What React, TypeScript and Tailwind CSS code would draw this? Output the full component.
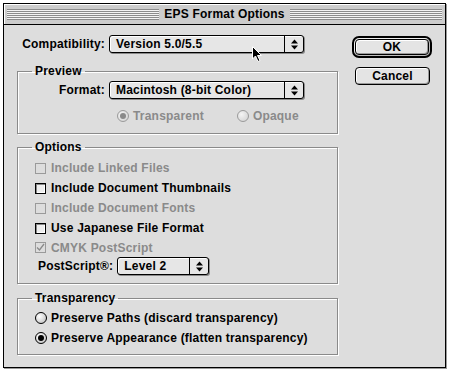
import React from "react";

// Mac OS 8/9 "Platinum" dialog: EPS Format Options

const Arrows = () => (
  <svg width="7" height="11" viewBox="0 0 7 11">
    <path d="M0 4.5 L3.5 0.5 L7 4.5 Z M0 6.5 L3.5 10.5 L7 6.5 Z" fill="#000" />
  </svg>
);

function Popup({ value, width }: { value: string; width: string }) {
  return (
    <div
      className={`${width} h-[18px] flex items-stretch border border-black rounded-[3px] bg-[#e6e6e6] shadow-[1px_1px_0_#8a8a8a,inset_1px_1px_0_#fff]`}
    >
      <span className="flex-1 pl-[6px] flex items-center text-black">{value}</span>
      <span className="w-[19px] border-l border-black flex items-center justify-center">
        <Arrows />
      </span>
    </div>
  );
}

function Checkbox({ checked, disabled }: { checked?: boolean; disabled?: boolean }) {
  return (
    <span
      className={
        disabled
          ? "w-[11px] h-[11px] border border-[#9a9a9a] bg-[#dddddd] flex items-center justify-center"
          : "w-[11px] h-[11px] border border-black bg-[#eeeeee] shadow-[inset_1px_1px_0_#888,inset_-1px_-1px_0_#fff] flex items-center justify-center"
      }
    >
      {checked && (
        <svg width="9" height="9" viewBox="0 0 9 9">
          <path d="M1 4.5 L3.5 7 L8 1" stroke={disabled ? "#8a8a8a" : "#000"} strokeWidth="1.3" fill="none" />
        </svg>
      )}
    </span>
  );
}

function Radio({ checked, disabled }: { checked?: boolean; disabled?: boolean }) {
  return (
    <span
      className={
        disabled
          ? "w-[12px] h-[12px] rounded-full border border-[#9a9a9a] bg-[radial-gradient(circle_at_35%_35%,#f4f4f4,#cfcfcf)] flex items-center justify-center"
          : "w-[12px] h-[12px] rounded-full border border-black bg-[radial-gradient(circle_at_35%_35%,#ffffff,#b8b8b8)] flex items-center justify-center"
      }
    >
      {checked && (
        <span className={disabled ? "w-[6px] h-[6px] rounded-full bg-[#8a8a8a]" : "w-[6px] h-[6px] rounded-full bg-black"} />
      )}
    </span>
  );
}

function Row({ children, className = "h-[20px]" }: { children: React.ReactNode; className?: string }) {
  return <div className={`${className} flex items-center`}>{children}</div>;
}

function Group({ title, children, className }: { title: string; children: React.ReactNode; className: string }) {
  return (
    <fieldset
      className={`${className} border border-[#8a8a8a] shadow-[1px_1px_0_#fff,inset_1px_1px_0_#fff] rounded-none`}
    >
      <legend className="ml-[14px] px-[3px] leading-[14px] text-black">{title}</legend>
      {children}
    </fieldset>
  );
}

export default function App() {
  return (
    <div className="w-[450px] h-[372px] bg-white pt-[3px] pl-[3px] font-['Liberation_Sans',Arial,sans-serif] font-bold text-[12px] leading-[14px] tracking-[0.2px] text-black">
      <div className="w-[443px] h-[365px] border border-black bg-[#dddddd] shadow-[1px_1px_0_#9a9a9a] flex flex-col relative">
        {/* title bar */}
        <div className="h-[21px] bg-[#cccccc] border-b border-black flex items-center px-[3px] shadow-[inset_1px_1px_0_#fff]">
          <div className="flex-1 h-[11px] bg-[repeating-linear-gradient(to_bottom,#8c8c8c_0px,#8c8c8c_1px,#f4f4f4_1px,#f4f4f4_2px)]" />
          <span className="px-[5px] text-[12px]">EPS Format Options</span>
          <div className="flex-1 h-[11px] bg-[repeating-linear-gradient(to_bottom,#8c8c8c_0px,#8c8c8c_1px,#f4f4f4_1px,#f4f4f4_2px)]" />
        </div>

        <div className="flex pl-[13px]">
          {/* left column */}
          <div className="w-[321px] flex flex-col">
            <Row className="h-[20px] mt-[9px]">
              <span className="w-[88px] text-right">Compatibility:</span>
              <span className="ml-[4px]">
                <Popup value="Version 5.0/5.5" width="w-[195px]" />
              </span>
            </Row>

            <Group title="Preview" className="mt-[10px] pt-[2px] pb-[7px]">
              <Row>
                <span className="w-[87px] text-right">Format:</span>
                <span className="ml-[4px]">
                  <Popup value="Macintosh (8-bit Color)" width="w-[195px]" />
                </span>
              </Row>
              <Row className="h-[20px] mt-[6px] text-[#8a8a8a]">
                <span className="ml-[99px]">
                  <Radio checked disabled />
                </span>
                <span className="ml-[4px]">Transparent</span>
                <span className="ml-[33px]">
                  <Radio disabled />
                </span>
                <span className="ml-[4px]">Opaque</span>
              </Row>
            </Group>

            <Group title="Options" className="mt-[6px] pt-[4px] pb-[8px]">
              <Row>
                <span className="ml-[17px]"><Checkbox disabled /></span>
                <span className="ml-[5px] text-[#8a8a8a]">Include Linked Files</span>
              </Row>
              <Row>
                <span className="ml-[17px]"><Checkbox /></span>
                <span className="ml-[5px]">Include Document Thumbnails</span>
              </Row>
              <Row>
                <span className="ml-[17px]"><Checkbox disabled /></span>
                <span className="ml-[5px] text-[#8a8a8a]">Include Document Fonts</span>
              </Row>
              <Row>
                <span className="ml-[17px]"><Checkbox /></span>
                <span className="ml-[5px]">Use Japanese File Format</span>
              </Row>
              <Row className="h-[19px]">
                <span className="ml-[17px]"><Checkbox checked disabled /></span>
                <span className="ml-[5px] text-[#8a8a8a]">CMYK PostScript</span>
              </Row>
              <Row className="h-[18px]">
                <span className="ml-[20px]">PostScript®:</span>
                <span className="ml-[4px]">
                  <Popup value="Level 2" width="w-[92px]" />
                </span>
              </Row>
            </Group>

            <Group title="Transparency" className="mt-[7px] pt-[3px] pb-[6px]">
              <Row>
                <span className="ml-[17px]"><Radio /></span>
                <span className="ml-[4px]">Preserve Paths (discard transparency)</span>
              </Row>
              <Row>
                <span className="ml-[17px]"><Radio checked /></span>
                <span className="ml-[4px]">Preserve Appearance (flatten transparency)</span>
              </Row>
            </Group>
          </div>

          {/* right column: buttons */}
          <div className="ml-[14px] w-[80px] flex flex-col pt-[11px]">
            <div className="h-[22px] border-[2px] border-black rounded-[7px] bg-[#bdbdbd] p-[1px] shadow-[inset_1px_1px_0_#eee]">
              <div className="h-full border border-black rounded-[4px] bg-[#e4e4e4] shadow-[inset_1px_1px_0_#fff,inset_-1px_-1px_0_#9a9a9a] flex items-center justify-center">
                OK
              </div>
            </div>
            <div className="mt-[9px] ml-[3px] w-[75px] h-[18px] border border-black rounded-[4px] bg-[#e4e4e4] shadow-[inset_1px_1px_0_#fff,inset_-1px_-1px_0_#9a9a9a] flex items-center justify-center">
              Cancel
            </div>
          </div>
        </div>

        {/* mouse pointer over the popup */}
        <svg className="absolute left-[248px] top-[42px]" width="11" height="17" viewBox="0 0 11 17">
          <path d="M0.5 0.5 L0.5 13 L3.5 10 L6 15.5 L8 14.5 L5.5 9.5 L9.5 9.5 Z" fill="#000" stroke="#fff" strokeWidth="1" />
        </svg>
      </div>
    </div>
  );
}
